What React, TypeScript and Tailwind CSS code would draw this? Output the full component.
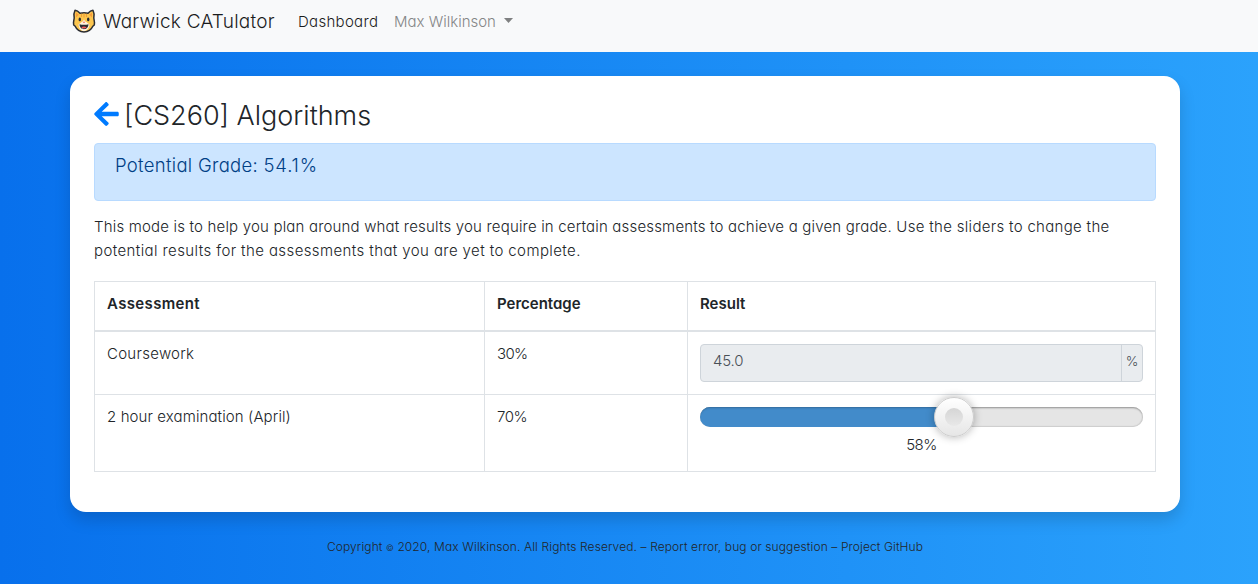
import React from "react";
import { FaArrowLeft } from "react-icons/fa";

function CatLogo() {
  return (
    <svg width="24" height="24" viewBox="0 0 24 24" aria-hidden="true">
      <path d="M3 1.300 C5 1.600 6.800 3 8 4.300 C10.500 3.600 13.500 3.600 16 4.300 C17.200 3 19 1.600 21 1.300 C22.300 4 22.400 7 21.800 9 L22.500 13.500 L22.300 16 L20.800 17.300 C19.200 21 16 22.900 12 22.900 C8 22.900 4.800 21 3.200 17.300 L1.700 16 L1.500 13.500 L2.200 9 C1.600 7 1.700 4 3 1.300Z" fill="#fcc64f" stroke="#2b2d33" strokeWidth="1.500" strokeLinejoin="round" />
      <path d="M3.900 3.500 L6.800 5.800 L4 8.500Z M20.100 3.500 L17.200 5.800 L20 8.500Z" fill="#f79b3b" />
      <path d="M9.500 4.800V8 M12 4.500V8.400 M14.500 4.800V8" stroke="#ef9f35" strokeWidth="1.100" />
      <path d="M12 10.500 C11.200 12.500 8.500 13.800 6.500 15.500 C7 19.500 9 22 12 22 C15 22 17 19.500 17.500 15.500 C15.500 13.800 12.800 12.500 12 10.500Z" fill="#fff3df" />
      <ellipse cx="7.800" cy="10.400" rx="1.200" ry="1.900" fill="#2b2d33" />
      <ellipse cx="16.200" cy="10.400" rx="1.200" ry="1.900" fill="#2b2d33" />
      <path d="M10.500 12.800H13.500L12 14.300Z" fill="#f06a5b" />
      <path d="M7.500 15.300C10 16 14 16 16.500 15.300C16.300 18.800 14.300 20.200 12 20.200C9.700 20.200 7.700 18.800 7.500 15.300Z" fill="#2b2d33" />
      <path d="M9.300 18.400Q12 16.800 14.700 18.400Q12 20.700 9.300 18.400Z" fill="#f2555a" />
    </svg>
  );
}

function Navbar() {
  return (
    <nav className="flex h-[52px] items-start bg-[#f8f9fa] pl-[72px]">
      <div className="flex h-[42px] items-center">
        <CatLogo />
        <span className="mt-[3px] ml-[7px] w-[171px] text-[19px] whitespace-nowrap tracking-[0.24px] text-[#1b1c1d]">Warwick CATulator</span>
        <span className="mt-[3px] ml-6 w-20 text-[15px] whitespace-nowrap tracking-[0.3px] text-[#1b1c1d]">Dashboard</span>
        <span className="mt-[3px] ml-4 w-[102px] text-[15px] whitespace-nowrap text-[#858687]">Max Wilkinson</span>
        <svg className="-mt-px ml-2" width="9" height="5" viewBox="0 0 9 5"><path d="M0 0H9L4.5 5Z" fill="#7f8081" /></svg>
      </div>
    </nav>
  );
}

function Slider({ value }: { value: number }) {
  return (
    <div className="relative h-5 rounded-[10px] bg-[#e5e5e5] shadow-[inset_0_2px_2px_-1px_#999,inset_0_0_1px_1px_#ccc]">
      <div className="h-5 rounded-[10px] bg-[#428bca] shadow-[inset_0_2px_2px_-1px_#336b9b]" style={{ width: `${value}%` }} />
      <div
        className="absolute top-[-10px] flex size-10 -translate-x-1/2 items-center justify-center rounded-full border border-[#ccc] bg-linear-to-b from-white to-[#e6e6e6] shadow-[0_0_8px_rgba(0,0,0,0.3)]"
        style={{ left: `${value * 0.91 + 4.5}%` }}
      >
        <div className="size-[18px] rounded-full bg-linear-to-b from-[#d5d5d5] to-[#e8e8e8]" />
      </div>
    </div>
  );
}

export default function App() {
  return (
    <div className="h-[584px] overflow-hidden bg-linear-to-r from-[#0870ec] to-[#2ba2fc] font-['Inter',sans-serif] font-light text-[#212529] [font-feature-settings:'cv11']">
      <Navbar />
      <main className="mt-6 ml-[70px] h-[436px] w-[1110px] rounded-2xl bg-white px-6 pt-6 shadow-[0_8px_16px_rgba(0,0,0,0.15)]">
        <h1 className="flex h-[31px] items-center text-[27px]">
          <FaArrowLeft className="-mt-[3px] h-7 w-[25px] shrink-0 text-[#007bff]" />
          <span className="mt-px ml-[5px]">[CS260] Algorithms</span>
        </h1>
        <div className="mt-3 h-[58px] rounded-[4px] border border-[#b8daff] bg-[#cce5ff] pt-[7px] pl-5 text-[18.5px] leading-7 text-[#004085]">
          <span className="tracking-[0.3px]">Potential Grade: </span><span className="tracking-[0.8px]">54.1%</span>
        </div>
        <p className="mt-[14px] text-[15px] leading-6 whitespace-nowrap">
          <span className="tracking-[0.18px]">This mode is to help you plan around what results you require in certain assessments to achieve a given grade. </span>
          <span className="tracking-[0.31px]">Use the sliders to change the</span><br />
          <span className="tracking-[0.4px]">potential results for the assessments that you are yet to complete.</span>
        </p>
        <table className="mt-[18px] w-full table-fixed border-collapse text-[15px] leading-6">
          <colgroup><col className="w-[390px]" /><col className="w-[203px]" /><col /></colgroup>
          <thead>
            <tr className="h-[49px] text-left align-top">
              <th className="border border-b-2 border-[#dee2e6] px-3 pt-[10px] font-semibold tracking-[0.35px]">Assessment</th>
              <th className="border border-b-2 border-[#dee2e6] px-3 pt-[10px] font-semibold">Percentage</th>
              <th className="border border-b-2 border-[#dee2e6] px-3 pt-[10px] font-semibold">Result</th>
            </tr>
          </thead>
          <tbody>
            <tr className="h-16 align-top">
              <td className="border border-[#dee2e6] px-3 pt-[10px] tracking-[0.28px]">Coursework</td>
              <td className="border border-[#dee2e6] px-3 pt-[10px] tracking-[-0.7px]">30%</td>
              <td className="border border-[#dee2e6] px-3 pt-3">
                <div className="flex h-[38px] rounded-[4px] border border-[#ced4da] bg-[#e9ecef] pt-1 text-[#495057]">
                  <span className="flex-1 pl-3 tracking-[-0.2px]">45.0</span>
                  <span className="-mt-1 w-[21px] border-l border-[#ced4da] pt-1 text-center text-[13.5px]">%</span>
                </div>
              </td>
            </tr>
            <tr className="h-[77px] align-top">
              <td className="border border-[#dee2e6] px-3 pt-[10px] tracking-[0.11px]">2 hour examination (April)</td>
              <td className="border border-[#dee2e6] px-3 pt-[10px] tracking-[-0.4px]">70%</td>
              <td className="border border-[#dee2e6] px-3 pt-3">
                <Slider value={58} />
                <div className="mt-[6px] text-center tracking-[-0.5px]">58%</div>
              </td>
            </tr>
          </tbody>
        </table>
      </main>
      <footer className="mt-[27px] flex justify-center pr-2 text-[12px] leading-4 tracking-[0.11px]">
        <span className="whitespace-pre">Copyright <span className="text-[8.5px]">©</span> 2020, Max Wilkinson. All Rights Reserved. – Report error, bug or suggestion – Project GitHub</span>
      </footer>
    </div>
  );
}
